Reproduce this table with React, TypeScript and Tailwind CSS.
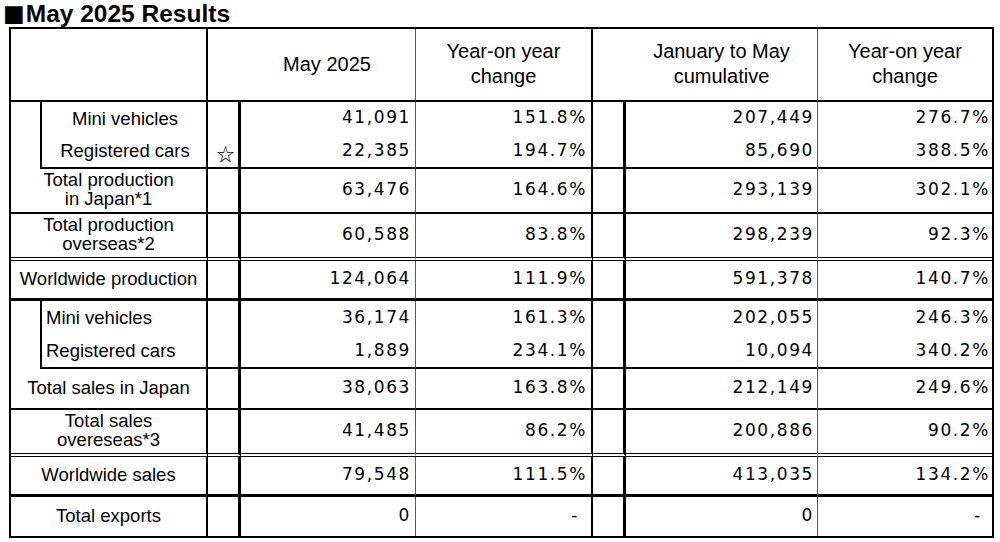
import React from "react";

type RowDef = {
  kind: "sub" | "merged";
  label: string[];
  left?: boolean;
  bottom: string;
  star?: boolean;
  vals: [string, string, string, string];
};

const NONE = "";
const SOLID = "border-b-2 border-b-black";
const DOUBLE = "border-b-4 [border-bottom-style:double] border-b-black";
const THICK = "border-b-[3px] border-b-black";

const rows: RowDef[] = [
  { kind: "sub", label: ["Mini vehicles"], bottom: NONE, vals: ["41,091", "151.8%", "207,449", "276.7%"] },
  { kind: "sub", label: ["Registered cars"], bottom: SOLID, star: true, vals: ["22,385", "194.7%", "85,690", "388.5%"] },
  { kind: "merged", label: ["Total production", "in Japan*1"], bottom: SOLID, vals: ["63,476", "164.6%", "293,139", "302.1%"] },
  { kind: "merged", label: ["Total production", "overseas*2"], bottom: DOUBLE, vals: ["60,588", "83.8%", "298,239", "92.3%"] },
  { kind: "merged", label: ["Worldwide production"], bottom: THICK, vals: ["124,064", "111.9%", "591,378", "140.7%"] },
  { kind: "sub", label: ["Mini vehicles"], left: true, bottom: NONE, vals: ["36,174", "161.3%", "202,055", "246.3%"] },
  { kind: "sub", label: ["Registered cars"], left: true, bottom: SOLID, vals: ["1,889", "234.1%", "10,094", "340.2%"] },
  { kind: "merged", label: ["Total sales in Japan"], bottom: SOLID, vals: ["38,063", "163.8%", "212,149", "249.6%"] },
  { kind: "merged", label: ["Total sales", "overeseas*3"], bottom: DOUBLE, vals: ["41,485", "86.2%", "200,886", "90.2%"] },
  { kind: "merged", label: ["Worldwide sales"], bottom: THICK, vals: ["79,548", "111.5%", "413,035", "134.2%"] },
  { kind: "merged", label: ["Total exports"], bottom: NONE, vals: ["0", "-", "0", "-"] },
];

const NUM = "flex items-center justify-end font-['DejaVu_Sans',sans-serif] text-[17px] tracking-[1.6px] leading-none pb-[2px] text-black";
const LABEL = "font-['Liberation_Sans',Arial,sans-serif] text-[18.5px] leading-[19px] text-black";

function Val({ v }: { v: string }) {
  if (v === "-") return <span className="mr-[8px]">-</span>;
  return <span>{v}</span>;
}

export default function App() {
  return (
    <div className="w-[1000px] h-[542px] bg-white overflow-hidden">
      <div className="h-[27px] pl-[3px] flex items-center font-['Liberation_Sans',Arial,sans-serif] font-bold text-[24.5px] leading-[27px] text-black">
        <span className="font-['DejaVu_Sans',sans-serif] font-normal text-[23px] leading-[23px] mr-[1px]">■</span>
        <span>May 2025 Results</span>
      </div>
      <div className="ml-[9px] w-[985px] border-2 border-black">
        <div className="grid grid-cols-[29px_168px_33px_175px_177px_33px_192px_174px] grid-rows-[73px_33px_34px_45px_47px_40px_34px_34px_41px_47px_40px_39px]">
          {/* header */}
          <div className="col-span-2 border-r-2 border-r-black border-b-2 border-b-black" />
          <div className="col-span-2 border-r border-r-[#5a5a5a] border-b-2 border-b-black flex items-center justify-center pl-[31px] font-['Liberation_Sans',Arial,sans-serif] text-[20px] leading-[25px] text-black">
            May 2025
          </div>
          <div className="border-r-2 border-r-black border-b-2 border-b-black flex flex-col items-center justify-center font-['Liberation_Sans',Arial,sans-serif] text-[20px] leading-[25px] text-black pb-[1px]">
            <span>Year-on year</span>
            <span>change</span>
          </div>
          <div className="col-span-2 border-r border-r-[#5a5a5a] border-b-2 border-b-black flex flex-col items-center justify-center pl-[33px] font-['Liberation_Sans',Arial,sans-serif] text-[20px] leading-[25px] text-black pb-[1px]">
            <span>January to May</span>
            <span>cumulative</span>
          </div>
          <div className="border-b-2 border-b-black flex flex-col items-center justify-center font-['Liberation_Sans',Arial,sans-serif] text-[20px] leading-[25px] text-black pb-[1px]">
            <span>Year-on year</span>
            <span>change</span>
          </div>

          {rows.map((r, i) => (
            <React.Fragment key={i}>
              {r.kind === "sub" ? (
                <>
                  <div />
                  <div
                    className={`border-l-2 border-l-black border-r-2 border-r-black ${r.bottom} flex items-center ${
                      r.left ? "justify-start pl-[4px]" : "justify-center pl-[2px]"
                    } ${LABEL} pb-[1px]`}
                  >
                    {r.label[0]}
                  </div>
                </>
              ) : (
                <div className={`col-span-2 border-r-2 border-r-black ${r.bottom} flex flex-col items-center justify-center ${LABEL} pb-[3px]`}>
                  {r.label.map((l, j) => (
                    <span key={j}>{l}</span>
                  ))}
                </div>
              )}
              <div className={`border-r-[3px] border-r-black ${r.bottom} flex items-center justify-center pl-[5px] pt-[4px] font-['Noto_Sans_CJK_JP',sans-serif] text-[18px] leading-none text-black`}>
                {r.star ? "☆" : ""}
              </div>
              <div className={`border-r border-r-[#5a5a5a] ${r.bottom} ${NUM} pr-[4px]`}>
                <Val v={r.vals[0]} />
              </div>
              <div className={`border-r-2 border-r-black ${r.bottom} ${NUM} pr-[4px]`}>
                <Val v={r.vals[1]} />
              </div>
              <div className={`border-r-[3px] border-r-black ${r.bottom}`} />
              <div className={`border-r border-r-[#5a5a5a] ${r.bottom} ${NUM} pr-[3px]`}>
                <Val v={r.vals[2]} />
              </div>
              <div className={`${r.bottom} ${NUM} pr-[2px]`}>
                <Val v={r.vals[3]} />
              </div>
            </React.Fragment>
          ))}
        </div>
      </div>
    </div>
  );
}
